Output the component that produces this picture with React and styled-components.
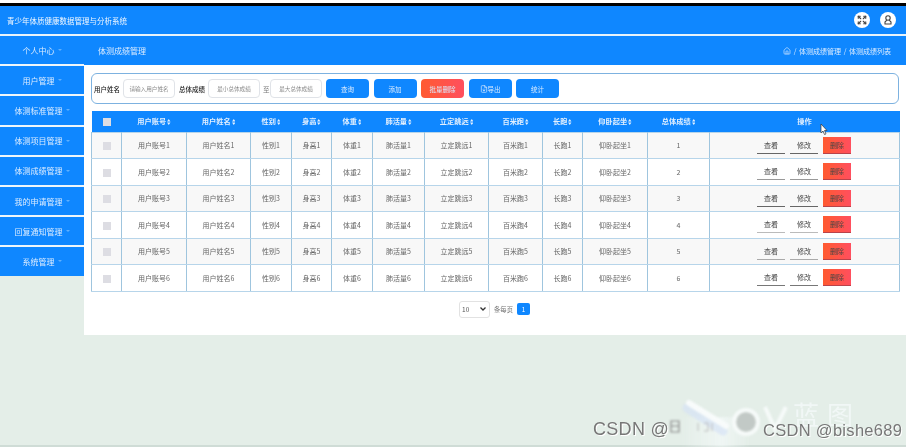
import React from 'react'
import styled, { createGlobalStyle } from 'styled-components'
import { Home, Expand, FileDown } from 'lucide-react'

const Global = createGlobalStyle`
html,body{margin:0;padding:0;background:#fff;}
*{box-sizing:border-box;}
body{font-family:"Noto Sans CJK SC","Liberation Sans",sans-serif;}
`

const Page = styled.div`
position:relative;
width:906px;
height:447px;
overflow:hidden;
background:#e4eee8;
filter:blur(.35px);
`
const TopEdge = styled.div`
height:6px;
background:#000;
border-top:3px solid #fff;
`
const Header = styled.div`
height:30px;
background:#0f87ff;
border-bottom:2px solid #e8f3fb;
display:flex;
align-items:center;
justify-content:space-between;
padding:0 10px 0 7px;
color:#f2f8ff;
font-size:7.5px;
`
const HeaderIcons = styled.div`
display:flex;
gap:10px;
`
const RoundIcon = styled.div`
width:16px;
height:16px;
border-radius:50%;
background:#fff;
color:#444;
display:flex;
align-items:center;
justify-content:center;
`
const Body = styled.div`
display:flex;
align-items:flex-start;
`
const Side = styled.div`
width:84px;
display:flex;
flex-direction:column;
gap:2px;
background:#eef6fb;
`
const SideItem = styled.div`
height:28.2px;
background:#0f87ff;
color:#dcecff;
font-size:8px;
display:flex;
align-items:center;
justify-content:center;
`
const Caret = styled.span`
width:0;
height:0;
margin-left:3px;
border:2.5px solid transparent;
border-top-color:#5fb0ff;
border-bottom:none;
`
const Main = styled.div`
width:822px;
height:299px;
background:#fff;
`
const SubHeader = styled.div`
height:29px;
background:#0f87ff;
color:#dcecff;
display:flex;
align-items:center;
justify-content:space-between;
padding:0 15px 0 14px;
font-size:8px;
`
const Crumbs = styled.div`
display:flex;
align-items:center;
gap:3px;
font-size:7px;
word-spacing:1px;
`
const Content = styled.div`
padding:8px 7px 0 7px;
`
const SearchBar = styled.div`
height:31px;
border:1px solid #7db2e0;
border-radius:6px;
display:flex;
align-items:center;
padding-left:2px;
color:#222;
`
const Label = styled.span`
width:26px;
margin-right:3px;
font-size:6.5px;
font-weight:500;
white-space:nowrap;
`
const Input = styled.div`
width:52px;
height:19px;
border:1px solid #e0e3e8;
border-radius:4px;
color:#8a8a8a;
font-size:5.600px;
display:flex;
align-items:center;
justify-content:center;
margin-right:${p => p.$mr || 4}px;
`
const To = styled.span`
width:7px;
font-size:6.5px;
color:#777;
`
const Btn = styled.div`
width:43px;
height:19px;
border-radius:4px;
background:${p => p.$danger ? 'linear-gradient(90deg,#ff5a30,#ff4f5f)' : '#0f87ff'};
color:#dcecff;
font-size:6.5px;
display:flex;
align-items:center;
justify-content:center;
margin-right:4.5px;
`
const Table = styled.table`
width:808px;
margin-top:7px;
border-collapse:collapse;
table-layout:fixed;
font-size:7px;
color:#666;
text-align:center;
`
const HeadCell = styled.th`
height:21px;
padding:0;
background:#0f87ff;
color:#e3f0ff;
font-size:7.2px;
font-weight:700;
`
const Row = styled.tr`
background:${p => p.$odd ? '#f8f8f8' : '#fff'};
`
const Cell = styled.td`
height:26.5px;
padding:0;
border-style:solid;
border-width:1px;
border-color:#b7d5ea #9fc5de;
`
const Check = styled.span`
display:inline-block;
width:8px;
height:8px;
background:#dddde3;
vertical-align:middle;
`
const Sort = styled.svg`
width:3.500px;
height:6px;
margin-left:1px;
vertical-align:-1px;
fill:#e3f0ff;
`
const Actions = styled.div`
display:flex;
justify-content:flex-end;
gap:5px;
padding-right:48px;
`
const ActionBtn = styled.div`
width:28px;
height:17px;
display:flex;
align-items:center;
justify-content:center;
color:#444;
background:${p => p.$danger ? 'linear-gradient(90deg,#ff5a30,#ff4f5f)' : 'transparent'};
border-bottom:1px solid ${p => p.$line};
`
const Pager = styled.div`
margin-top:9px;
display:flex;
align-items:center;
justify-content:center;
gap:4px;
padding-right:1px;
font-size:6.3px;
color:#777;
`
const Select = styled.div`
width:31px;
height:17px;
border:1px solid #e2e2e2;
border-radius:3px;
display:flex;
align-items:center;
justify-content:space-between;
padding:0 3px 0 2px;
color:#555;
font-size:6.5px;
`
const PageNum = styled.div`
width:13px;
height:12px;
background:#0f87ff;
color:#fff;
border-radius:2px;
display:flex;
align-items:center;
justify-content:center;
`
const BottomLine = styled.div`
position:absolute;
left:0;
right:0;
bottom:0;
height:2px;
background:#cfdcd6;
`
const Cursor = styled.svg`
position:absolute;
left:820px;
top:124px;
width:8px;
height:11px;
`
const Logo = styled.svg`
position:absolute;
left:660px;
top:395px;
width:246px;
height:52px;
filter:blur(1px);
`
const LogoWord = styled.span`
position:absolute;
left:793px;
top:405px;
font-size:26px;
line-height:17px;
letter-spacing:8px;
color:#f1f7f6;
white-space:nowrap;
filter:blur(.6px);
`
const Mark = styled.span`
position:absolute;
top:${p => p.$top}px;
left:${p => p.$left}px;
font-family:"Liberation Sans",sans-serif;
font-size:${p => p.$size}px;
line-height:14px;
color:#777;
white-space:nowrap;
letter-spacing:.3px;
text-shadow:1px 1px 0 #fff;
`

const menus = ['个人中心','用户管理','体测标准管理','体测项目管理','体测成绩管理','我的申请管理','回复通知管理','系统管理']
const cols = [
  { w:30 },
  { w:65, t:'用户账号' },
  { w:64, t:'用户姓名' },
  { w:41, t:'性别' },
  { w:40, t:'身高' },
  { w:41, t:'体重' },
  { w:52, t:'肺活量' },
  { w:64, t:'立定跳远' },
  { w:54, t:'百米跑' },
  { w:40, t:'长跑' },
  { w:65, t:'仰卧起坐' },
  { w:62, t:'总体成绩' },
  { w:190 },
]
// the underline of the two plain buttons differs from row to row
const lines = { 1:'#666', 2:'#999', 3:'#666', 4:'#bbb', 5:'#aaa', 6:'#777' }

const SortIcon = () => (
  <Sort viewBox="0 0 4 7"><path d="M2 0 4 3H0ZM2 7 0 4h4Z" /></Sort>
)

export default function App() {
  return (
    <Page>
      <Global />
      <TopEdge />
      <Header>
        <span>青少年体质健康数据管理与分析系统</span>
        <HeaderIcons>
          <RoundIcon><Expand size={10} strokeWidth={2.6} /></RoundIcon>
          <RoundIcon>
            <svg width="10" height="10" viewBox="0 0 10 10" fill="none" stroke="currentColor" strokeWidth="1.100">
              <circle cx="5" cy="3" r="2.200" />
              <path d="M3.800 5.200 2 7v2h6V7L6.200 5.200" />
            </svg>
          </RoundIcon>
        </HeaderIcons>
      </Header>
      <Body>
        <Side>
          {menus.map(m => <SideItem key={m}>{m}<Caret /></SideItem>)}
        </Side>
        <Main>
          <SubHeader>
            <span>体测成绩管理</span>
            <Crumbs><Home size={8} /> / 体测成绩管理 / 体测成绩列表</Crumbs>
          </SubHeader>
          <Content>
            <SearchBar>
              <Label>用户姓名</Label>
              <Input>请输入用户姓名</Input>
              <Label>总体成绩</Label>
              <Input $mr={3}>最小总体成绩</Input>
              <To>至</To>
              <Input>最大总体成绩</Input>
              <Btn>查询</Btn>
              <Btn>添加</Btn>
              <Btn $danger>批量删除</Btn>
              <Btn><FileDown size={8} />导出</Btn>
              <Btn>统计</Btn>
            </SearchBar>
            <Table>
              <colgroup>{cols.map((c, i) => <col key={i} style={{ width: c.w }} />)}</colgroup>
              <thead>
                <tr>
                  <HeadCell><Check /></HeadCell>
                  {cols.slice(1, 12).map(c => <HeadCell key={c.t}>{c.t}<SortIcon /></HeadCell>)}
                  <HeadCell>操作</HeadCell>
                </tr>
              </thead>
              <tbody>
                {[1,2,3,4,5,6].map(n => (
                  <Row key={n} $odd={n % 2 === 1}>
                    <Cell><Check /></Cell>
                    {cols.slice(1, 11).map(c => <Cell key={c.t}>{c.t}{n}</Cell>)}
                    <Cell>{n}</Cell>
                    <Cell>
                      <Actions>
                        <ActionBtn $line={lines[n]}>查看</ActionBtn>
                        <ActionBtn $line={lines[n]}>修改</ActionBtn>
                        <ActionBtn $danger $line="#b9434a">删除</ActionBtn>
                      </Actions>
                    </Cell>
                  </Row>
                ))}
              </tbody>
            </Table>
            <Pager>
              <Select>10<svg width="6" height="4" viewBox="0 0 6 4"><path d="M.5.5 3 3 5.500.5" fill="none" stroke="#333" strokeWidth="1.300" /></svg></Select>
              <span>条每页</span>
              <PageNum>1</PageNum>
            </Pager>
          </Content>
        </Main>
      </Body>
      <BottomLine />
      <Cursor viewBox="0 0 8 11"><path d="M1 0v9l2-2 1.500 3.500 1.500-.6L4.500 6.500H7Z" fill="#fff" stroke="#333" strokeWidth=".7" /></Cursor>
      <Logo viewBox="0 0 246 52">
        <defs>
          <linearGradient id="glow" x1="0" y1="0" x2="1" y2="0">
            <stop offset="0" stopColor="#f2f8f7" stopOpacity="0" />
            <stop offset=".6" stopColor="#f2f8f7" stopOpacity=".8" />
            <stop offset="1" stopColor="#f2f8f7" stopOpacity="0" />
          </linearGradient>
        </defs>
        <path d="M20 22H90V52H20Z" fill="url(#glow)" />
        <path d="M27 13 63 36" fill="none" stroke="#d6e2f5" strokeWidth="9" strokeLinecap="round" opacity=".7" />
        <path d="M29 8 66 31" fill="none" stroke="#f8fbfb" strokeWidth="6" strokeLinecap="round" />
        <circle cx="86" cy="27" r="10" fill="#c2c9c6" />
        <circle cx="86" cy="27" r="12" fill="none" stroke="#f6faf9" strokeWidth="4" />
        <path d="M105 12 115 34 126 12" fill="none" stroke="#f6faf9" strokeWidth="4" />
        <path d="M11 26h8v11h-8ZM11 31h8" fill="none" stroke="#888" strokeWidth="1.200" />
        <path d="M38 28v8M44 28h4v8h-4M52 28v8" fill="none" stroke="#bbb" strokeWidth="1" />
      </Logo>
      <LogoWord>蓝图</LogoWord>
      <Mark $top={422} $left={593} $size={18}>CSDN @</Mark>
      <Mark $top={423} $left={763} $size={16.500}>CSDN @bishe689</Mark>
    </Page>
  )
}
